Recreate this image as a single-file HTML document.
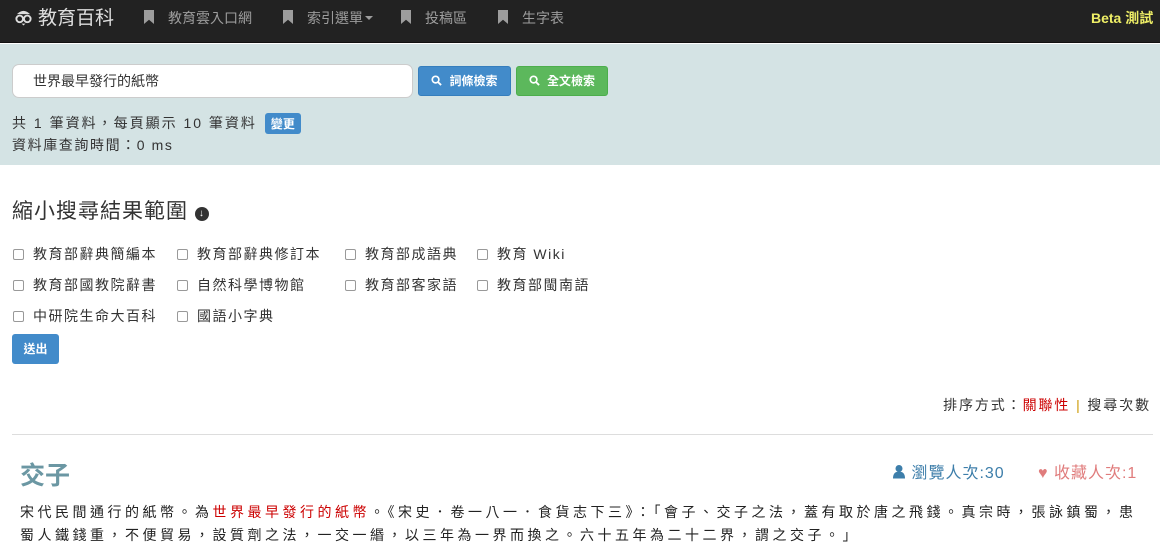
<!DOCTYPE html>
<html><head><meta charset="utf-8"><style>
*{box-sizing:border-box;margin:0;padding:0}
body{width:1160px;height:553px;overflow:hidden;background:#fff;font-family:"Liberation Sans","Noto Sans CJK TC",sans-serif;font-size:14px;color:#333;position:relative}
.abs{position:absolute;white-space:nowrap}
.nav{position:absolute;left:0;top:0;width:1160px;height:43px;background:#222;border-bottom:1px solid #111}
.nav .it{position:absolute;top:0;line-height:37px;color:#9d9d9d;font-size:14px}
.bm{display:inline-block;width:10px;height:14px;background:#9d9d9d;vertical-align:-1px;margin-right:14px;clip-path:polygon(0 0,100% 0,100% 100%,50% 70%,0 100%)}
.top{position:absolute;left:0;top:44px;width:1160px;height:121px;background:#d4e3e4}
.btn{position:absolute;color:#fff;font-size:12px;font-weight:bold;border-radius:3px;text-align:center}
.cb{position:absolute;font-size:14px;letter-spacing:1.5px}
.cb i{display:inline-block;width:11px;height:11px;border:1px solid #999;border-radius:2px;margin-right:9px;vertical-align:-1px;background:#fff}
</style></head><body>
<div class="nav">
 <div class="it" style="left:14px;color:#ddd;font-size:19px">
  <svg width="19" height="20" viewBox="0 0 20 20" style="vertical-align:-3px;margin-right:5px"><path d="M3 7 Q10 0 17 7 Z" fill="#ddd"/><circle cx="6" cy="12" r="3.5" fill="none" stroke="#ddd" stroke-width="2"/><circle cx="14" cy="12" r="3.5" fill="none" stroke="#ddd" stroke-width="2"/><path d="M8 17 L10 19 L12 17" fill="#ddd"/></svg>教育百科</div>
 <div class="it" style="left:144px"><span class="bm"></span>教育雲入口網</div>
 <div class="it" style="left:283px"><span class="bm"></span>索引選單<span style="display:inline-block;border:4px solid transparent;border-top-color:#9d9d9d;margin-left:2px;vertical-align:-1px"></span></div>
 <div class="it" style="left:401px"><span class="bm"></span>投稿區</div>
 <div class="it" style="left:498px"><span class="bm"></span>生字表</div>
 <div class="it" style="left:1091px;color:#eeee66;font-weight:bold;font-size:14px">Beta 測試</div>
</div>
<div class="top">
 <div class="abs" style="left:12px;top:20px;width:401px;height:34px;background:#fff;border:1px solid #ccc;border-radius:7px;padding-left:20px;line-height:32px;font-size:14px">世界最早發行的紙幣</div>
 <div class="btn" style="left:418px;top:22px;width:93px;height:30px;line-height:28px;background:#428bca;border:1px solid #357ebd"><svg width="11" height="11" viewBox="0 0 12 12" style="vertical-align:-1px;margin-right:7px"><circle cx="5" cy="5" r="3.6" fill="none" stroke="#fff" stroke-width="1.8"/><path d="M7.6 7.6 L11 11" stroke="#fff" stroke-width="2"/></svg>詞條檢索</div>
 <div class="btn" style="left:516px;top:22px;width:92px;height:30px;line-height:28px;background:#5cb85c;border:1px solid #4cae4c"><svg width="11" height="11" viewBox="0 0 12 12" style="vertical-align:-1px;margin-right:7px"><circle cx="5" cy="5" r="3.6" fill="none" stroke="#fff" stroke-width="1.8"/><path d="M7.6 7.6 L11 11" stroke="#fff" stroke-width="2"/></svg>全文檢索</div>
 <div class="abs" style="left:12px;top:69px;letter-spacing:2px">共 1 筆資料，每頁顯示 10 筆資料 <span style="display:inline-block;background:#428bca;color:#fff;font-size:12px;font-weight:bold;padding:2px 6px;border-radius:3px;letter-spacing:0;margin-left:2px">變更</span></div>
 <div class="abs" style="left:12px;top:91px;letter-spacing:1.6px">資料庫查詢時間：0 ms</div>
</div>
<div class="abs" style="left:12px;top:195px;font-size:21px;letter-spacing:1px">縮小搜尋結果範圍 <span style="display:inline-block;width:14px;height:14px;border-radius:50%;background:#333;color:#fff;font-size:10px;line-height:14px;text-align:center;vertical-align:2px">&#x2193;</span></div>
<div class="cb" style="left:13px;top:244px"><i></i>教育部辭典簡編本</div>
<div class="cb" style="left:177px;top:244px"><i></i>教育部辭典修訂本</div>
<div class="cb" style="left:345px;top:244px"><i></i>教育部成語典</div>
<div class="cb" style="left:477px;top:244px"><i></i>教育 Wiki</div>
<div class="cb" style="left:13px;top:275px"><i></i>教育部國教院辭書</div>
<div class="cb" style="left:177px;top:275px"><i></i>自然科學博物館</div>
<div class="cb" style="left:345px;top:275px"><i></i>教育部客家語</div>
<div class="cb" style="left:477px;top:275px"><i></i>教育部閩南語</div>
<div class="cb" style="left:13px;top:306px"><i></i>中研院生命大百科</div>
<div class="cb" style="left:177px;top:306px"><i></i>國語小字典</div>
<div class="btn" style="left:12px;top:334px;width:47px;height:30px;line-height:30px;background:#428bca">送出</div>
<div class="abs" style="right:9px;top:395px;letter-spacing:1.9px">排序方式：<span style="color:#c00">關聯性</span> <span style="color:#c90">|</span> 搜尋次數</div>
<div class="abs" style="left:12px;top:434px;width:1141px;height:1px;background:#ddd"></div>
<div class="abs" style="left:20px;top:456px;font-size:25px;font-weight:bold;color:#6b97a3">交子</div>
<div class="abs" style="left:892px;top:459px;font-size:16px;letter-spacing:1px;color:#3d7eaa"><svg width="14" height="15" viewBox="0 0 14 14" style="vertical-align:-1px"><circle cx="7" cy="4" r="3.5" fill="#3d7eaa"/><path d="M1 14 Q1 7 7 7 Q13 7 13 14Z" fill="#3d7eaa"/></svg> 瀏覽人次:30</div>
<div class="abs" style="left:1038px;top:459px;font-size:16px;letter-spacing:1px;color:#e07c7c">&#x2665; 收藏人次:1</div>
<div class="abs" style="left:20px;top:501px;line-height:23px;letter-spacing:3.5px;font-size:14px;color:#222">宋代民間通行的紙幣。為<span style="color:#c00">世界最早發行的紙幣</span>。《宋史．卷一八一．食貨志下三》：「會子、交子之法，蓋有取於唐之飛錢。真宗時，張詠鎮蜀，患<br>蜀人鐵錢重，不便貿易，設質劑之法，一交一緡，以三年為一界而換之。六十五年為二十二界，謂之交子。」</div>
</body></html>
